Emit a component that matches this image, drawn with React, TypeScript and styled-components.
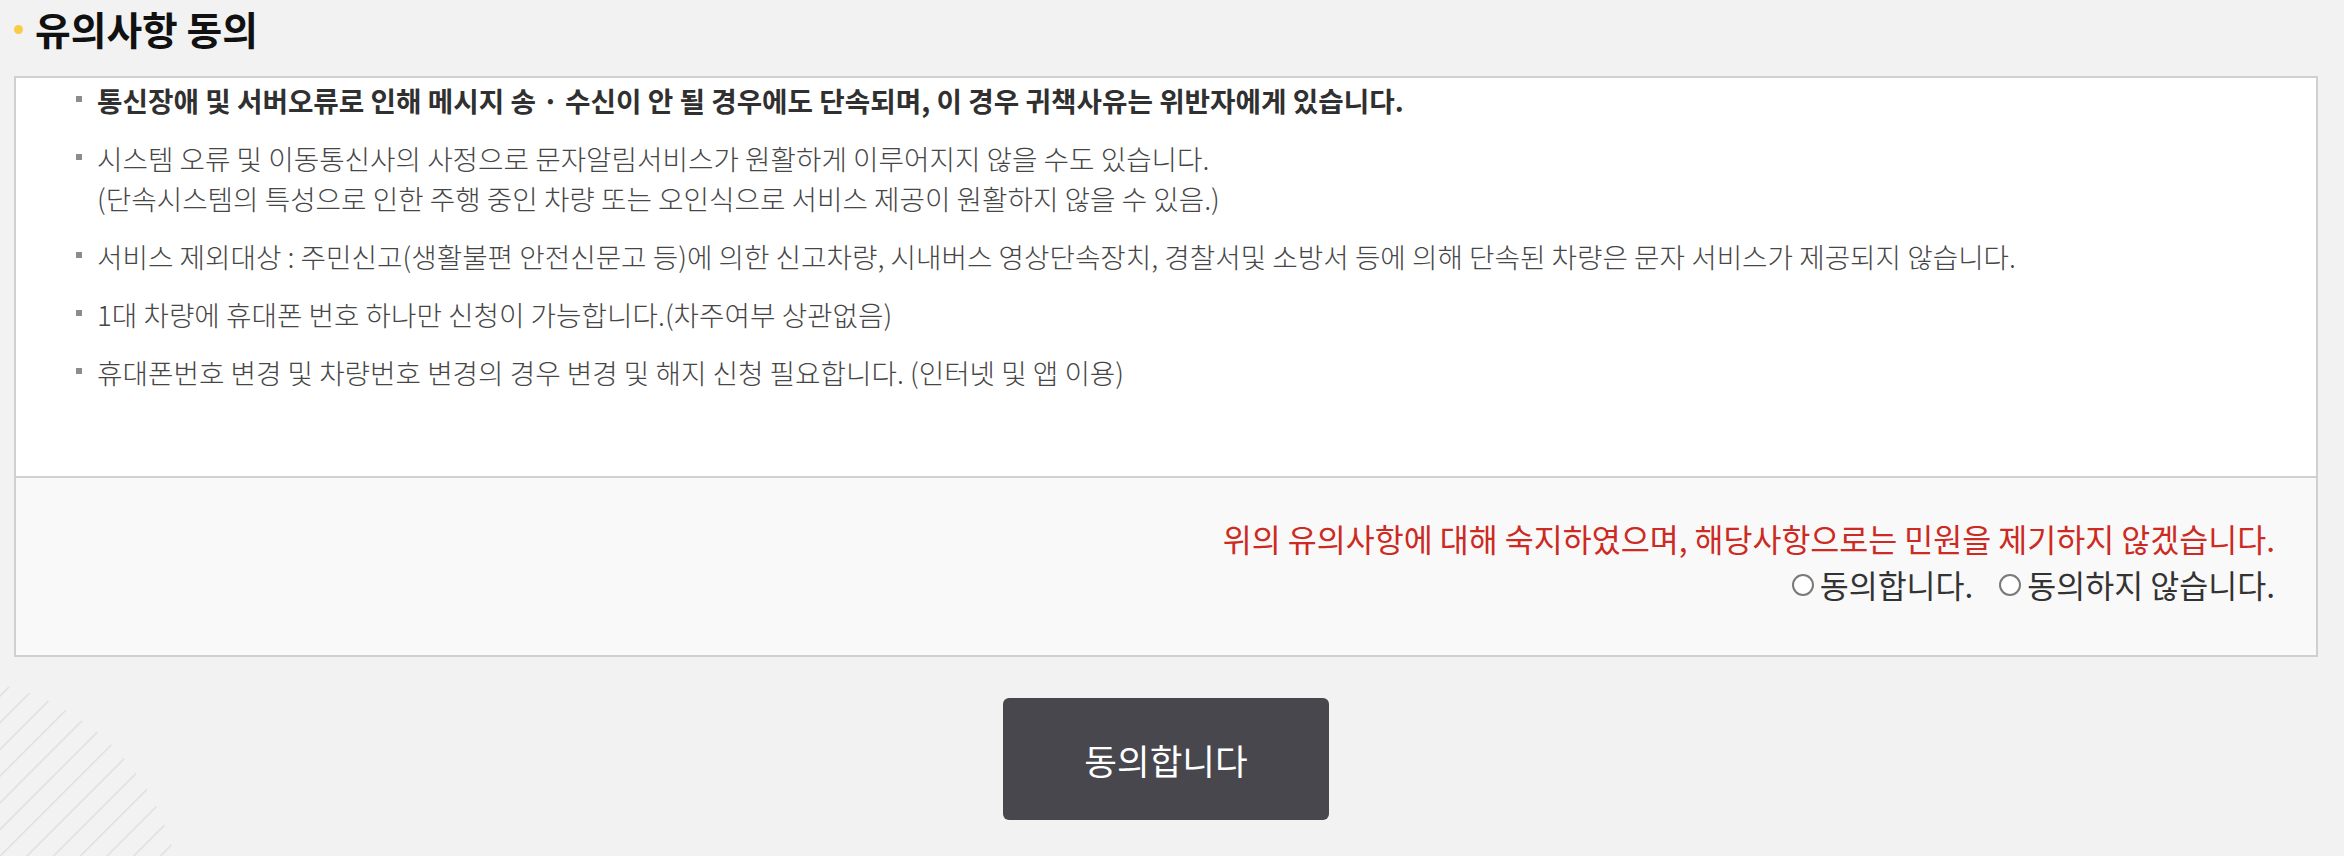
import React from 'react';
import styled, { createGlobalStyle } from 'styled-components';

const GlobalStyle = createGlobalStyle`
  html, body {
    margin: 0;
    padding: 0;
    background: #f2f2f2;
  }
  body {
    font-family: "Noto Sans CJK KR", "Noto Sans", sans-serif;
    color: #333;
  }
`;

const Page = styled.div`
  position: relative;
  min-height: 856px;
  padding: 0 26px 0 14px;
  box-sizing: border-box;
`;

const Content = styled.div`
  position: relative;
  z-index: 1;
  display: flex;
  flex-direction: column;
`;

const Title = styled.h2`
  display: flex;
  align-items: center;
  gap: 12px;
  margin: 0 0 20px;
  height: 56px;
  font-size: 38.8px;
  font-weight: 700;
  color: #111;

  &::before {
    content: '';
    width: 9px;
    height: 9px;
    border-radius: 50%;
    background: #f7cd45;
    margin-top: 2px;
  }
`;

const Box = styled.section`
  border: 2px solid #d0d0d0;
  background: #fff;
`;

const NoticeList = styled.ul`
  list-style: none;
  margin: 0;
  padding: 2px 0 0 60px;
  height: 398px;
  box-sizing: border-box;
  display: flex;
  flex-direction: column;
  gap: 18px;
`;

const Item = styled.li<{ $strong?: boolean }>`
  display: flex;
  font-size: 27.7px;
  line-height: 40px;
  font-weight: ${(p) => (p.$strong ? 700 : 300)};
  color: ${(p) => (p.$strong ? '#303030' : '#464646')};

  &::before {
    content: '';
    flex: none;
    width: 6px;
    height: 6px;
    background: #8c8c8c;
    margin: 16px 15px 0 0;
  }
`;

const Agree = styled.div`
  border-top: 2px solid #d0d0d0;
  background: #f9f9f9;
  padding: 37px 41px 48px;
  display: flex;
  flex-direction: column;
  align-items: flex-end;
`;

const Warning = styled.p`
  margin: 0;
  font-size: 31.5px;
  line-height: 46px;
  color: #cc2a22;
`;

const Choices = styled.div`
  display: flex;
  align-items: center;
  gap: 26px;
  height: 46px;
`;

const Choice = styled.label`
  display: flex;
  align-items: center;
  gap: 6px;
  font-size: 31.5px;
  color: #333;
  cursor: pointer;
`;

const Radio = styled.input`
  appearance: none;
  margin: 2px 0 0;
  width: 22px;
  height: 22px;
  border: 2px solid #7a7a7a;
  border-radius: 50%;
  background: #fff;
  box-sizing: border-box;

  &:checked {
    background: radial-gradient(circle, #555 0 4px, #fff 5px);
  }
`;

const Actions = styled.div`
  display: flex;
  justify-content: center;
  margin-top: 41px;
`;

const SubmitButton = styled.button`
  width: 326px;
  height: 122px;
  border: none;
  border-radius: 6px;
  background: #47474d;
  color: #fff;
  font-family: inherit;
  font-size: 35.5px;
  font-weight: 400;
  cursor: pointer;
`;

const Stripes = styled.svg`
  position: absolute;
  left: 0;
  bottom: 0;
  z-index: 0;
`;

const notices = [
  '시스템 오류 및 이동통신사의 사정으로 문자알림서비스가 원활하게 이루어지지 않을 수도 있습니다.',
  '서비스 제외대상 : 주민신고(생활불편 안전신문고 등)에 의한 신고차량, 시내버스 영상단속장치, 경찰서및 소방서 등에 의해 단속된 차량은 문자 서비스가 제공되지 않습니다.',
  '1대 차량에 휴대폰 번호 하나만 신청이 가능합니다.(차주여부 상관없음)',
  '휴대폰번호 변경 및 차량번호 변경의 경우 변경 및 해지 신청 필요합니다. (인터넷 및 앱 이용)',
];

const stripeOffsets = Array.from({ length: 26 }, (_, i) => 40 + i * 26.7);

export default function App() {
  return (
    <Page>
      <GlobalStyle />
      <Stripes width="260" height="200" viewBox="0 0 260 200">
        <defs>
          <clipPath id="stripe-clip">
            <circle cx="-50" cy="254" r="231" />
          </clipPath>
        </defs>
        <g clipPath="url(#stripe-clip)" stroke="#e1e1e1" strokeWidth="1.6">
          {stripeOffsets.map((s) => (
            <line key={s} x1={s + 60} y1={-60} x2={-60} y2={s + 60} />
          ))}
        </g>
      </Stripes>
      <Content>
        <Title>유의사항 동의</Title>
        <Box>
          <NoticeList>
            <Item $strong>
              통신장애 및 서버오류로 인해 메시지 송 · 수신이 안 될 경우에도 단속되며, 이 경우 귀책사유는 위반자에게 있습니다.
            </Item>
            <Item>
              <span>
                {notices[0]}
                <br />
                (단속시스템의 특성으로 인한 주행 중인 차량 또는 오인식으로 서비스 제공이 원활하지 않을 수 있음.)
              </span>
            </Item>
            {notices.slice(1).map((text) => (
              <Item key={text}>{text}</Item>
            ))}
          </NoticeList>
          <Agree>
            <Warning>위의 유의사항에 대해 숙지하였으며, 해당사항으로는 민원을 제기하지 않겠습니다.</Warning>
            <Choices>
              <Choice>
                <Radio type="radio" name="agree" value="Y" />
                동의합니다.
              </Choice>
              <Choice>
                <Radio type="radio" name="agree" value="N" />
                동의하지 않습니다.
              </Choice>
            </Choices>
          </Agree>
        </Box>
        <Actions>
          <SubmitButton type="button">동의합니다</SubmitButton>
        </Actions>
      </Content>
    </Page>
  );
}
